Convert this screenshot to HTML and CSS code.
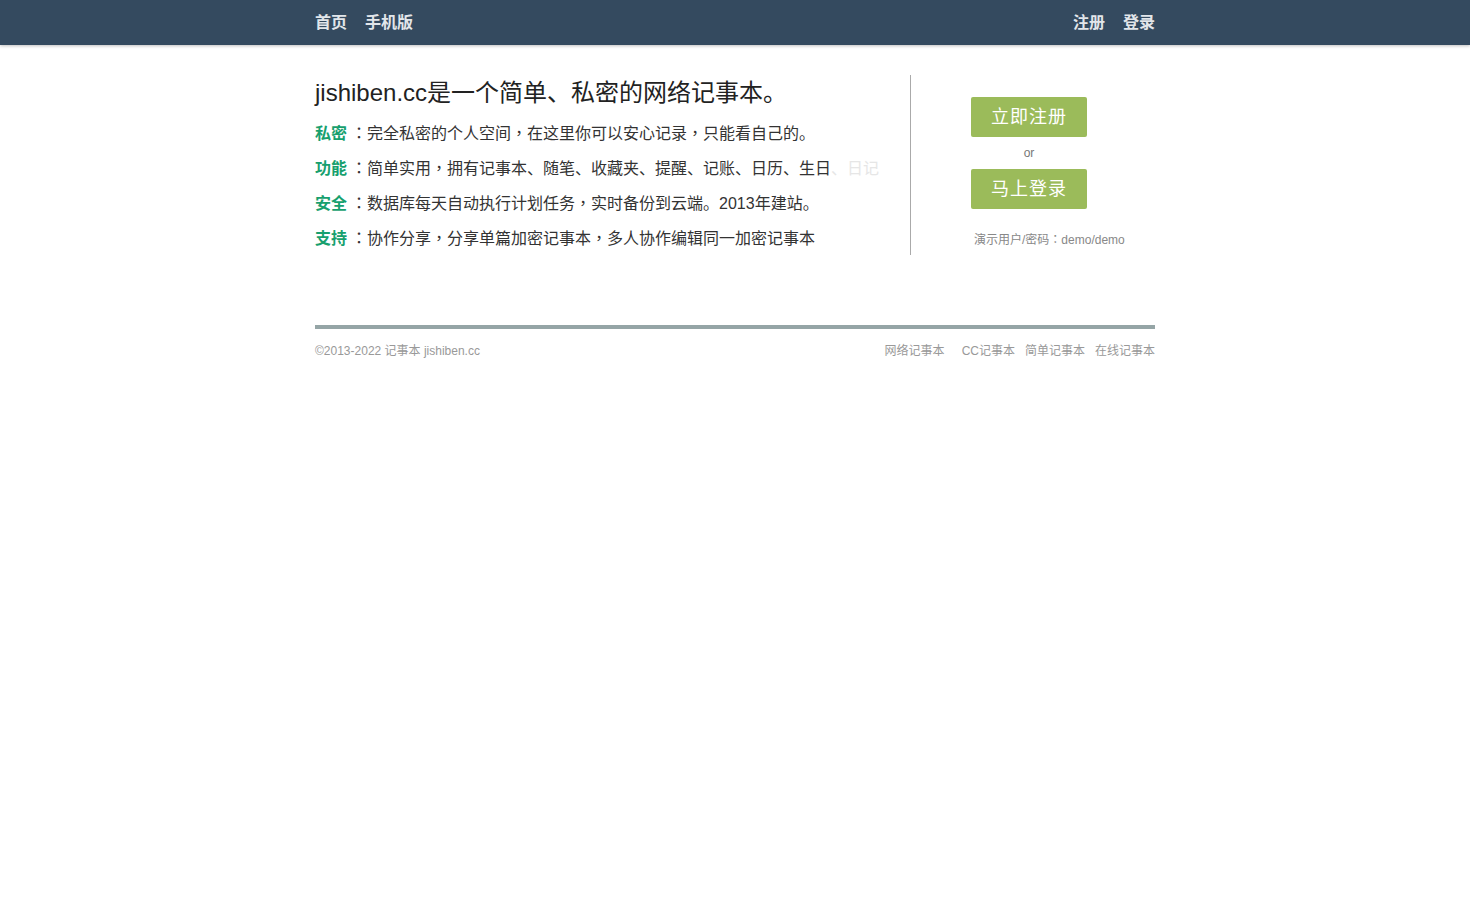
FILE: index.html
```html
<!DOCTYPE html>
<html lang="zh-CN">
<head>
<meta charset="utf-8">
<title>记事本 jishiben.cc</title>
<link rel="stylesheet" href="styles.css">
</head>
<body>
<header class="navbar">
  <div class="container nav-inner">
    <nav class="nav-left">
      <a href="#">首页</a>
      <a href="#">手机版</a>
    </nav>
    <nav class="nav-right">
      <a href="#">注册</a>
      <a href="#">登录</a>
    </nav>
  </div>
</header>
<main class="container main">
  <section class="intro">
    <h1 class="title">jishiben.cc是一个简单、私密的网络记事本。</h1>
    <ul class="features">
      <li><b class="label">私密</b><span class="p" lang="zh-TW">：</span>完全私密的个人空间<span class="p" lang="zh-TW">，</span>在这里你可以安心记录<span class="p" lang="zh-TW">，</span>只能看自己的。</li>
      <li><b class="label">功能</b><span class="p" lang="zh-TW">：</span>简单实用<span class="p" lang="zh-TW">，</span>拥有记事本、随笔、收藏夹、提醒、记账、日历、生日<span class="fade">、日记</span></li>
      <li><b class="label">安全</b><span class="p" lang="zh-TW">：</span>数据库每天自动执行计划任务<span class="p" lang="zh-TW">，</span>实时备份到云端。2013年建站。</li>
      <li><b class="label">支持</b><span class="p" lang="zh-TW">：</span>协作分享<span class="p" lang="zh-TW">，</span>分享单篇加密记事本<span class="p" lang="zh-TW">，</span>多人协作编辑同一加密记事本</li>
    </ul>
  </section>
  <aside class="actions">
    <a class="btn" href="#">立即注册</a>
    <div class="or">or</div>
    <a class="btn" href="#">马上登录</a>
    <div class="demo">演示用户/密码<span class="p" lang="zh-TW">：</span>demo/demo</div>
  </aside>
</main>
<footer class="container footer">
  <div class="copy">©2013-2022 记事本 jishiben.cc</div>
  <div class="links">
    <a href="#" class="first">网络记事本</a>
    <a href="#">CC记事本</a>
    <a href="#">简单记事本</a>
    <a href="#">在线记事本</a>
  </div>
</footer>
</body>
</html>
```
FILE: styles.css
```css
* { box-sizing: border-box; }
html, body { margin: 0; padding: 0; }
body {
  font-family: "Liberation Sans", "Noto Sans CJK SC", sans-serif;
  color: #333;
  background: #fff;
}
a { text-decoration: none; }
.container { width: 840px; margin: 0 auto; }
.p {
  font-family: "Noto Sans CJK TC", sans-serif;
  line-height: 1;
}

.navbar {
  height: 45px;
  background: #344a5f;
  box-shadow: 0 1px 3px rgba(0,0,0,0.25);
}
.nav-inner {
  height: 45px;
  display: flex;
  justify-content: space-between;
  align-items: center;
}
.nav-left, .nav-right { display: flex; gap: 18px; }
.navbar a {
  color: #e2e6ea;
  font-size: 16px;
  font-weight: bold;
  line-height: 45px;
}

.main {
  display: flex;
  margin-top: 30px;
}
.intro {
  width: 596px;
  border-right: 1px solid #aaa;
}
.title {
  margin: 0;
  font-size: 24px;
  font-weight: normal;
  line-height: 36px;
  color: #222;
}
.features {
  list-style: none;
  margin: 5px 0 0;
  padding: 0;
}
.features li {
  font-size: 16px;
  line-height: 35px;
  height: 35px;
  color: #333;
  white-space: nowrap;
}
.features li:last-child { height: 34px; }
.label {
  color: #17a06e;
  margin-right: 4px;
}
.fade { color: #e6e6e6; }

.actions {
  flex: 1;
  padding: 22px 0 0 60px;
}
.btn {
  display: block;
  width: 116px;
  height: 40px;
  line-height: 40px;
  text-align: center;
  background: #9bbb5a;
  color: #fff;
  font-size: 18px;
  letter-spacing: 1px;
  border-radius: 2px;
}
.or {
  width: 116px;
  text-align: center;
  font-size: 12px;
  color: #777;
  line-height: 32px;
}
.demo {
  margin: 23px 0 0 3px;
  font-size: 12px;
  color: #888;
  line-height: 16px;
  height: 16px;
  white-space: nowrap;
}

.footer {
  margin-top: 70px;
  border-top: 4px solid #95a5a6;
  display: flex;
  justify-content: space-between;
  padding-top: 14px;
  font-size: 12px;
  color: #999;
  line-height: 16px;
}
.links { display: flex; gap: 10px; }
.links a { color: #999; }
.links .first { margin-right: 7px; }
```
